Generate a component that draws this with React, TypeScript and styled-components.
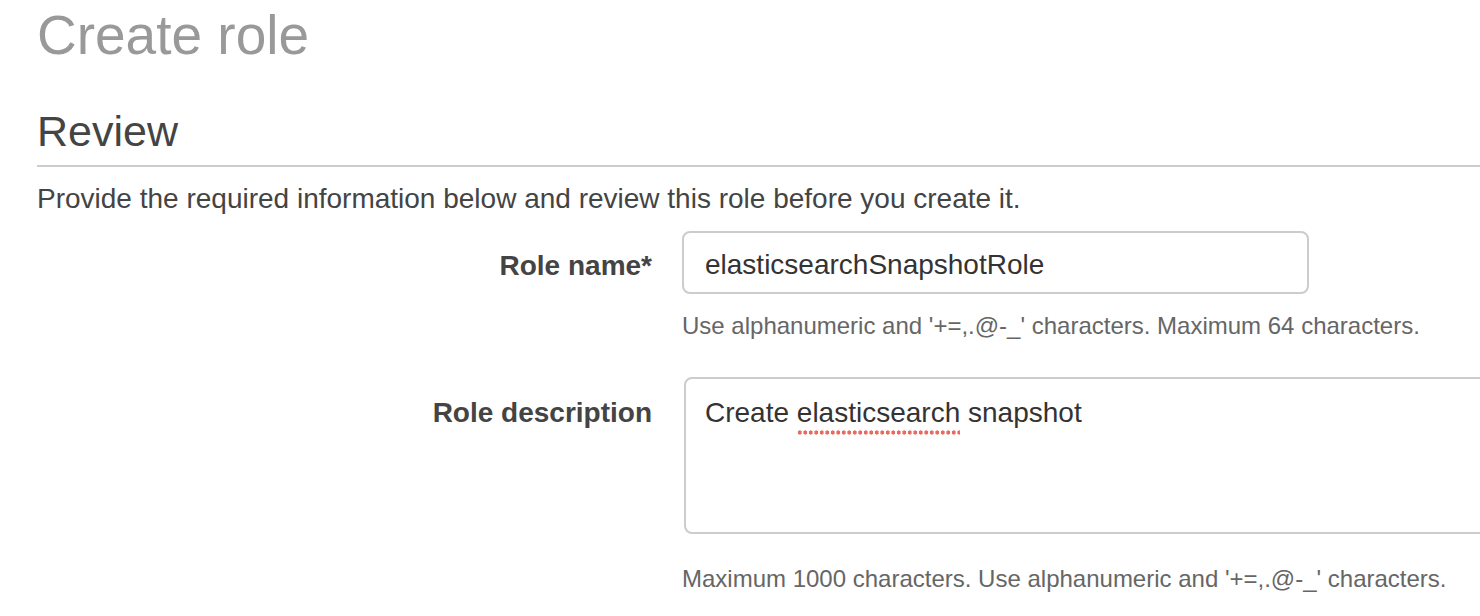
import React from 'react';
import styled, { createGlobalStyle } from 'styled-components';

const GlobalStyle = createGlobalStyle`
  html, body {
    margin: 0;
    padding: 0;
    background: #fff;
    overflow: hidden;
  }
  body {
    font-family: "Liberation Sans", Arial, Helvetica, sans-serif;
    color: #444;
  }
`;

const Page = styled.div`
  padding: 4px 0 0 37px;
  width: 1480px;
  box-sizing: border-box;
  overflow: hidden;
`;

const PageTitle = styled.h1`
  margin: 0;
  font-size: 55px;
  line-height: 62px;
  font-weight: normal;
  color: #999;
`;

const SectionTitle = styled.h2`
  margin: 41px 0 0;
  padding-bottom: 10px;
  font-size: 43px;
  line-height: 48px;
  font-weight: normal;
  color: #444;
  border-bottom: 2px solid #ccc;
`;

const Intro = styled.p`
  margin: 12px 0 0;
  font-size: 28px;
  line-height: 40px;
  color: #444;
`;

const Row = styled.div<{ $top: number }>`
  display: grid;
  grid-template-columns: 615px 1fr;
  column-gap: 30px;
  margin-top: ${p => p.$top}px;
`;

const Label = styled.label<{ $pad: number }>`
  text-align: right;
  font-size: 28px;
  line-height: 40px;
  font-weight: bold;
  color: #444;
  padding-top: ${p => p.$pad}px;
`;

const Field = styled.div`
  display: flex;
  flex-direction: column;
  min-width: 0;
`;

const TextInput = styled.input`
  box-sizing: border-box;
  width: 627px;
  height: 63px;
  padding: 4px 21px 0;
  border: 2px solid #ccc;
  border-radius: 8px;
  font-family: inherit;
  font-size: 28px;
  color: #333;
  outline: none;
`;

const TextArea = styled.div`
  box-sizing: border-box;
  margin-left: 2px;
  width: 900px;
  height: 157px;
  padding: 14px 19px;
  border: 2px solid #ccc;
  border-radius: 8px;
  font-size: 28px;
  line-height: 40px;
  color: #333;
`;

const Misspelled = styled.span`
  padding-bottom: 7px;
  background-image: radial-gradient(circle, #ea6a5f 1.9px, transparent 2.3px);
  background-size: 5.5px 5px;
  background-repeat: repeat-x;
  background-position: 0 100%;
`;

const Help = styled.div<{ $top: number }>`
  margin-top: ${p => p.$top}px;
  font-size: 24px;
  line-height: 32px;
  color: #666;
`;

export default function App() {
  return (
    <Page>
      <GlobalStyle />
      <PageTitle>Create role</PageTitle>
      <SectionTitle>Review</SectionTitle>
      <Intro>Provide the required information below and review this role before you create it.</Intro>

      <Row $top={12}>
        <Label $pad={15}>Role name*</Label>
        <Field>
          <TextInput defaultValue="elasticsearchSnapshotRole" spellCheck={false} />
          <Help $top={16}>Use alphanumeric and '+=,.@-_' characters. Maximum 64 characters.</Help>
        </Field>
      </Row>

      <Row $top={35}>
        <Label $pad={16}>Role description</Label>
        <Field>
          <TextArea role="textbox">
            Create <Misspelled>elasticsearch</Misspelled> snapshot
          </TextArea>
          <Help $top={29}>Maximum 1000 characters. Use alphanumeric and '+=,.@-_' characters.</Help>
        </Field>
      </Row>
    </Page>
  );
}
